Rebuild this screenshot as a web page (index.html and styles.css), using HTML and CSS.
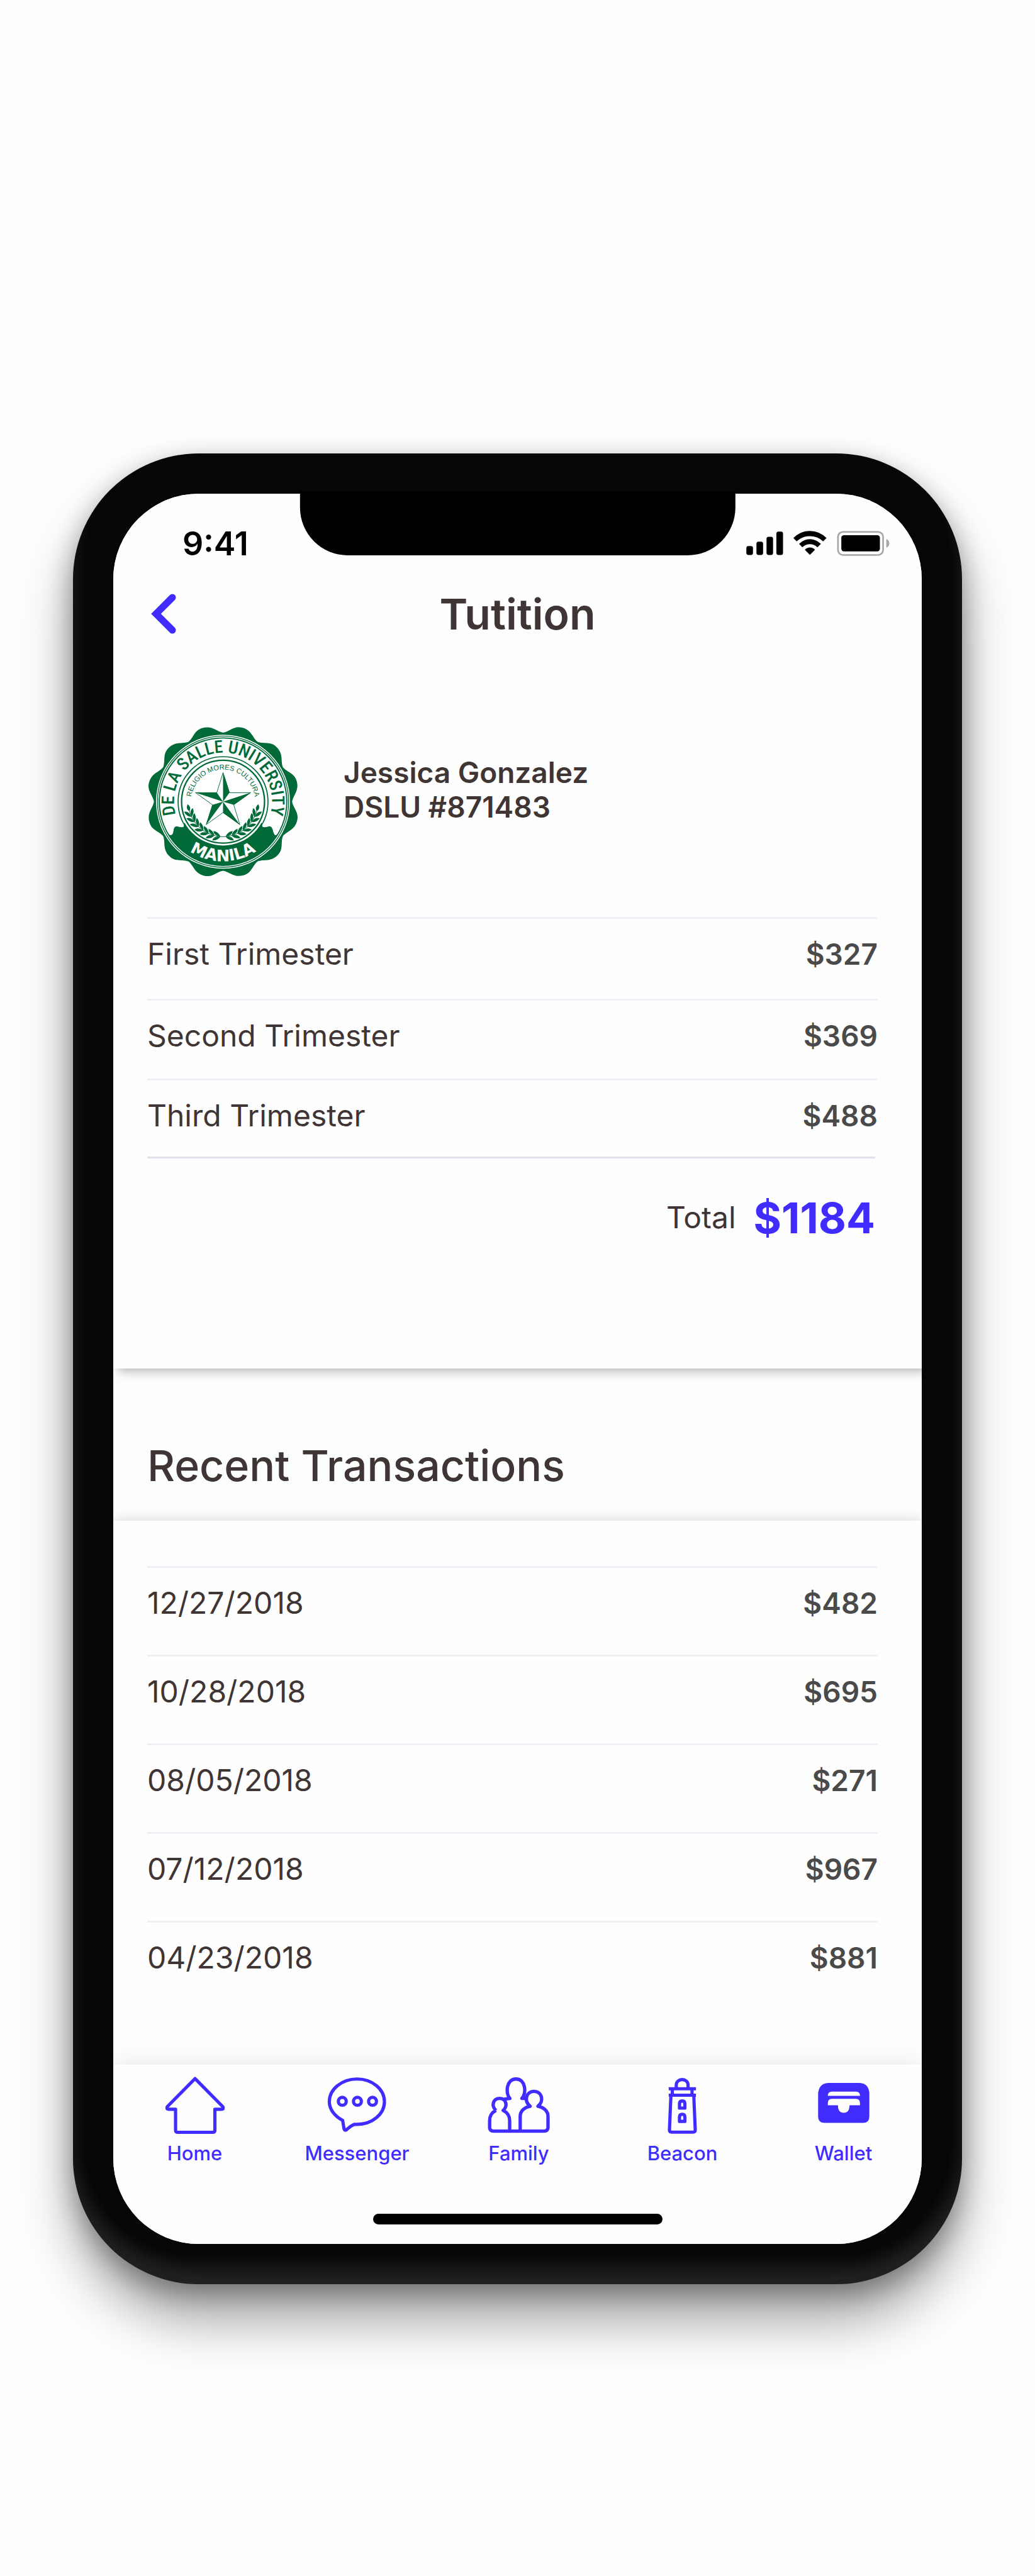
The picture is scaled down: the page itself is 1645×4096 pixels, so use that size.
FILE: index.html
```html
<!DOCTYPE html>
<html lang="en">
<head>
<meta charset="utf-8">
<meta name="viewport" content="width=device-width, initial-scale=1">
<title>Tutition</title>
<link rel="stylesheet" href="styles.css">
</head>
<body>
<div class="phone">
  <div class="notch"></div>
  <div class="screen">
    <section class="account">
      <div class="status">
        <span class="time">9:41</span>
        <svg class="status-icons" viewBox="45 380 1208 212" aria-hidden="true">
          <rect x="46" y="508" width="56" height="76" rx="18"/>
          <rect x="131" y="471" width="56" height="113" rx="18"/>
          <rect x="216" y="430" width="55" height="154" rx="18"/>
          <rect x="299" y="387" width="56" height="197" rx="18"/>
          <path d="M442 441 Q500 381 581 381 Q662 381 721 441 L693 469 Q645 425 581 425 Q517 425 470 469Z"/>
          <path d="M490 490 Q530 450 581 450 Q632 450 674 490 L645 519 Q617 493 581 493 Q545 493 518 519Z"/>
          <path d="M539 540 Q556 520 581 520 Q607 520 624 540 L581 583Z"/>
          <rect x="818" y="389" width="380" height="195" rx="42" fill="none" stroke="#a6a6a6" stroke-width="14"/>
          <rect x="846" y="417" width="325" height="136" rx="22"/>
          <path d="M1225 449 Q1250 460 1250 486 Q1250 512 1225 522Z" fill="#a6a6a6"/>
        </svg>
      </div>
      <header class="title-bar">
        <button class="back" type="button" aria-label="Back">
          <svg viewBox="0 0 40 64" aria-hidden="true"><path d="M34 6 L8 32 L34 58" fill="none" stroke="#412cff" stroke-width="11" stroke-linecap="round" stroke-linejoin="miter"/></svg>
        </button>
        <h1>Tutition</h1>
      </header>
      <div class="profile">
        <svg class="seal" viewBox="98 134 1244 1244" role="img" aria-label="University seal">
          <defs>
            <path id="petal" d="M-150,-556 C-95,-582 -78,-638 -6,-638 C78,-638 95,-582 150,-556 L60,-200 L-60,-200Z"/>
            <g id="leaf">
              <path d="M14 0 Q-6 -38 -50 -40 Q-42 0 14 0Z"/>
              <path d="M14 0 Q-6 38 -50 40 Q-42 0 14 0Z"/>
            </g>
            <path id="arc-name" d="M324 859 A409 409 0 1 1 1116 859"/>
            <path id="arc-motto" d="M452 757 A268 268 0 0 1 988 757"/>
            <path id="arc-city" d="M350 1090 A498 498 0 0 0 1090 1090"/>
          </defs>
          <g fill="#006a38">
            <g transform="translate(720 757)">
              <use href="#petal" transform="rotate(15)"/><use href="#petal" transform="rotate(45)"/><use href="#petal" transform="rotate(75)"/>
              <use href="#petal" transform="rotate(105)"/><use href="#petal" transform="rotate(135)"/><use href="#petal" transform="rotate(165)"/>
              <use href="#petal" transform="rotate(195)"/><use href="#petal" transform="rotate(225)"/><use href="#petal" transform="rotate(255)"/>
              <use href="#petal" transform="rotate(285)"/><use href="#petal" transform="rotate(315)"/><use href="#petal" transform="rotate(345)"/>
            </g>
            <circle cx="720" cy="757" r="574"/>
            <circle cx="720" cy="757" r="559" fill="#fff"/>
            <circle cx="720" cy="757" r="551"/>
            <circle cx="720" cy="757" r="544" fill="#fff"/>
            <circle cx="720" cy="757" r="532" fill="#fff" stroke="#006a38" stroke-width="10"/>
            <path d="M400 930 L390 968 Q358 972 345 965 Q314 956 308 990 Q304 1036 284 1037 L262 1030 A534 534 0 0 0 1178 1030 L1156 1037 Q1144 1034 1134 990 Q1126 956 1095 965 Q1082 972 1050 968 L1040 930Z"/>
            <circle cx="720" cy="757" r="366" fill="#fff"/>
            <g fill="none" stroke="#006a38">
              <circle cx="720" cy="757" r="375" stroke-width="9"/>
              <circle cx="720" cy="757" r="346" stroke-width="12"/>
            </g>
            <text class="seal-name"><textPath href="#arc-name" startOffset="50%" text-anchor="middle">DE LA SALLE UNIVERSITY</textPath></text>
            <text class="seal-motto"><textPath href="#arc-motto" startOffset="50%" text-anchor="middle">RELIGIO MORES CULTURA</textPath></text>
            <text class="seal-city" fill="#fff"><textPath href="#arc-city" startOffset="50%" text-anchor="middle">MANILA</textPath></text>
            <path d="M720 515 L773 682 L950 682 L809 783 L860 948 L720 848 L580 948 L632 783 L490 682 L668 682Z" fill="#fff" stroke="#006a38" stroke-width="5"/>
            <path d="M720 508 L775 680 L720 757ZM955 680 L810 783 L720 757ZM863 953 L720 850 L720 757ZM577 953 L632 783 L720 757ZM485 680 L667 680 L720 757Z"/>
            <g id="branch">
              <g transform="translate(720 757)">
                <use href="#leaf" transform="rotate(7) translate(0 292)"/>
                <use href="#leaf" transform="rotate(17) translate(0 292)"/>
                <use href="#leaf" transform="rotate(27) translate(0 292)"/>
                <use href="#leaf" transform="rotate(37) translate(0 292)"/>
                <use href="#leaf" transform="rotate(47) translate(0 292)"/>
                <use href="#leaf" transform="rotate(57) translate(0 292)"/>
                <use href="#leaf" transform="rotate(67) translate(0 292)"/>
                <path transform="rotate(77) translate(0 292)" d="M14 0 Q-14 -28 -46 0 Q-14 28 14 0Z"/>
                <path d="M0 293 A293 293 0 0 1 -286 60" fill="none" stroke="#006a38" stroke-width="5"/>
              </g>
            </g>
            <use href="#branch" transform="translate(1440 0) scale(-1 1)"/>
          </g>
        </svg>
        <p class="student">Jessica Gonzalez<br>DSLU #871483</p>
      </div>
      <table class="ledger terms">
        <tbody>
          <tr><th scope="row">First Trimester</th><td>$327</td></tr>
          <tr><th scope="row">Second Trimester</th><td>$369</td></tr>
          <tr><th scope="row">Third Trimester</th><td>$488</td></tr>
        </tbody>
      </table>
      <p class="total"><span>Total</span><strong>$1184</strong></p>
    </section>

    <section class="heading">
      <h2>Recent Transactions</h2>
    </section>

    <section class="history">
      <table class="ledger">
        <tbody>
          <tr><th scope="row">12/27/2018</th><td>$482</td></tr>
          <tr><th scope="row">10/28/2018</th><td>$695</td></tr>
          <tr><th scope="row">08/05/2018</th><td>$271</td></tr>
          <tr><th scope="row">07/12/2018</th><td>$967</td></tr>
          <tr><th scope="row">04/23/2018</th><td>$881</td></tr>
        </tbody>
      </table>
    </section>

    <footer class="dock">
      <nav class="tabs">
        <a href="#home">
          <svg width="94" height="93" viewBox="160 100 164 160" aria-hidden="true"><path d="M242 106 L165 184 Q161 191 169 191 H188 V249 Q188 255 194 255 H291 Q297 255 297 249 V191 H316 Q323 191 319 184Z"/></svg>
          <span>Home</span>
        </a>
        <a href="#messenger">
          <svg width="95" height="93" viewBox="608 96 166 162" aria-hidden="true"><path d="M683 230 H691 C733 230 767 202 767 167 C767 132 733 104 691 104 C649 104 614 132 614 167 C614 188 628 207 651 219 Q653 232 655 243 Q658 250 664 243 Q672 235 683 230Z"/><circle cx="650" cy="166" r="11"/><circle cx="692" cy="166" r="11"/><circle cx="734" cy="166" r="11"/></svg>
          <span>Messenger</span>
        </a>
        <a href="#family">
          <svg class="family" width="101" height="93" viewBox="155 118 530 486" aria-hidden="true"><path d="M296 310 L346 304 C306 262 316 142 397 142 C478 142 488 262 446 304 L482 304"/><path d="M230 404 C188 365 206 304 260 304 C314 304 332 365 290 404 C330 425 344 450 344 490 V577"/><path d="M230 404 C190 425 177 450 177 490 V545 Q177 577 210 577 H630 Q664 577 664 545 V455 C664 410 630 378 580 369 C635 325 612 245 547 245 C482 245 460 325 515 369 C465 378 432 410 432 455 V577"/></svg>
          <span>Family</span>
        </a>
        <a href="#beacon">
          <svg width="49" height="93" viewBox="456 100 86 162" aria-hidden="true"><path d="M482 131 V125 C482 104 515 104 515 125 V131M461 135 H537M471 135 V152M526 135 V152M461 153 H537M467 156 L463 250 Q463 256 469 256 H529 Q535 256 535 250 L531 156"/><path d="M491 189 V177 Q491 169 499 169 Q506 169 506 177 V189ZM491 226 V214 Q491 206 499 206 Q506 206 506 214 V226Z"/></svg>
          <span>Beacon</span>
        </a>
        <a href="#wallet" aria-current="page">
          <svg class="wallet" width="86" height="93" viewBox="867 100 150 162" aria-hidden="true"><path d="M899 119 H986 Q1013 121 1013 150 V212 Q1013 230 995 230 H889 Q871 230 871 212 V150 Q872 121 899 119Z"/><path class="slot" d="M898 155 Q898 143 909 143 H976 Q987 143 987 155ZM898 181 V175 Q898 163 909 163 H976 Q987 163 987 175 V181 H958 Q958 202 942 202 Q926 202 926 181Z"/></svg>
          <span>Wallet</span>
        </a>
      </nav>
      <div class="indicator"></div>
    </footer>
  </div>
</div>
</body>
</html>
```
FILE: styles.css
```css
* {
  box-sizing: border-box;
}

body {
  margin: 0;
  padding: 721px 116px 464px;
  background: #fefefe;
  color: #3f3535;
  font-family: Inter, "Liberation Sans", sans-serif;
}

h1, h2, p {
  margin: 0;
}

.phone {
  position: relative;
  padding: 64px;
  border-radius: 200px;
  background: #060606;
  box-shadow:
    0 57px 86px rgba(0, 0, 0, .36),
    0 14px 40px rgba(0, 0, 0, .32),
    inset 0 -28px 28px rgba(255, 255, 255, .11);
}

.notch {
  position: absolute;
  z-index: 3;
  top: 60px;
  left: 50%;
  width: 49%;
  height: 102px;
  border-radius: 0 0 76px 76px;
  background: #000;
  transform: translateX(-50%);
}

.screen {
  overflow: hidden;
  border-radius: 136px;
  background: #fefefe;
}

.account {
  position: relative;
  z-index: 1;
  padding-bottom: 199px;
  background: #fefefe;
  box-shadow: 8px 4px 16px rgba(0, 0, 0, .3);
}

/* Status bar */
.status {
  display: flex;
  align-items: center;
  justify-content: space-between;
  height: 158px;
  padding: 0 50px 0 110px;
}

.time {
  color: #000;
  font-size: 52px;
  font-weight: 600;
}

.status-icons {
  width: 230px;
  height: 40px;
}

/* Title bar */
.title-bar {
  display: grid;
  grid-template-columns: 1fr auto 1fr;
  align-items: center;
  height: 66px;
  padding: 0 60px;
}

.title-bar h1 {
  font-size: 68px;
  font-weight: 600;
  line-height: 66px;
}

.back {
  justify-self: start;
  width: 40px;
  height: 64px;
  padding: 0;
  border: 0;
  background: none;
}

.back svg {
  display: block;
}

/* Student */
.profile {
  display: flex;
  align-items: flex-start;
  gap: 73px;
  padding: 147px 56px 65px;
}

.seal {
  flex: none;
  width: 237px;
  height: 237px;
}

.seal-name {
  font: 500 146px "Roboto Condensed", "Liberation Sans", sans-serif;
}

.seal-motto {
  font: 59px "Liberation Sans", sans-serif;
}

.seal-city {
  font: bold 134px "DejaVu Sans", sans-serif;
}

.student {
  padding-top: 45px;
  font-size: 46px;
  font-weight: 600;
  line-height: 55px;
}

/* Amount lists */
.ledger {
  width: calc(100% - 124px);
  margin-left: 54px;
  border-spacing: 0;
}

.ledger tr {
  height: 141px;
}

.ledger th,
.ledger td {
  padding: 0;
  border-top: 3px solid #efeff5;
  line-height: 112px;
  vertical-align: top;
}

.ledger th {
  font-size: 48px;
  font-weight: 400;
  text-align: left;
}

.ledger td {
  color: #4a4a4a;
  font-size: 46px;
  font-weight: 600;
  text-align: right;
}

.terms tr {
  height: 127px;
}

.terms tr:first-child {
  height: 130px;
}

.terms tr:last-child {
  height: 124px;
}

.total {
  display: flex;
  align-items: center;
  justify-content: flex-end;
  gap: 28px;
  margin: 0 74px 0 54px;
  padding-top: 53px;
  border-top: 3px solid #dfe2ec;
  font-size: 48px;
  line-height: 82px;
}

.total strong {
  color: #412cff;
  font-size: 68px;
  font-weight: 700;
}

/* Recent transactions */
.heading {
  padding: 113px 54px 47px;
  background: #fcfefd;
}

.heading h2 {
  font-size: 68px;
  font-weight: 500;
  line-height: 82px;
}

.history {
  padding: 72px 0 88px;
  background: #fefefe;
  box-shadow: 0 0 20px rgba(0, 0, 0, .16);
}

/* Bottom navigation */
.dock {
  position: relative;
  padding: 18px 0 31px;
  background: #fefefe;
  box-shadow: 0 0 38px rgba(0, 0, 0, .1);
}

.tabs {
  display: grid;
  grid-template-columns: 259fr 257fr 257fr 263fr 249fr;
}

.tabs a {
  display: flex;
  flex-direction: column;
  align-items: center;
  gap: 10px;
  color: #412cff;
  font-size: 31px;
  font-weight: 500;
  line-height: 40px;
  text-decoration: none;
}

.tabs svg {
  fill: none;
  stroke: currentColor;
  stroke-width: 9px;
  stroke-linejoin: round;
}

.tabs .family {
  stroke-width: 28px;
}

.tabs .wallet {
  fill: currentColor;
  stroke: none;
}

.tabs .slot {
  fill: #fefefe;
}

.indicator {
  width: 460px;
  height: 17px;
  margin: 76px auto 0;
  border-radius: 9px;
  background: #000;
}
```
